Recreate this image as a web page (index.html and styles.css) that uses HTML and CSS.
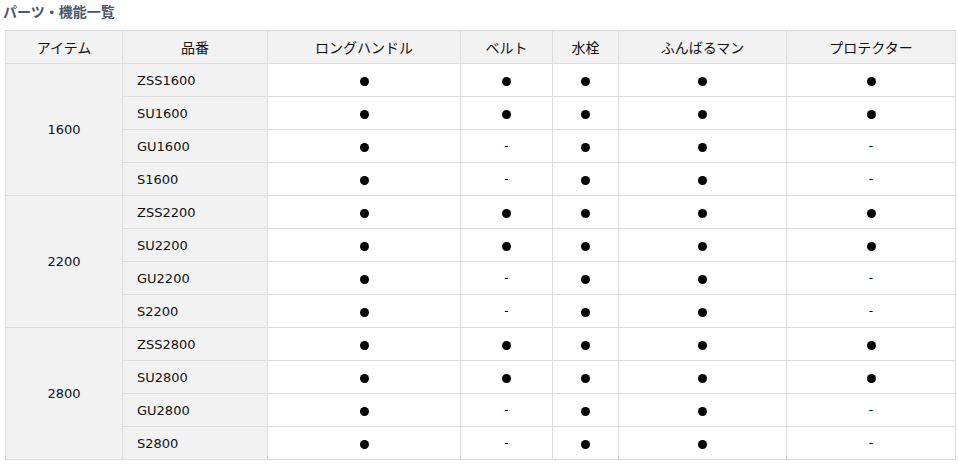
FILE: index.html
```html
<!DOCTYPE html>
<html lang="ja">
<head>
<meta charset="utf-8">
<link rel="stylesheet" href="styles.css">
</head>
<body>
<h2 class="title">パーツ・機能一覧</h2>
<table class="spec">
<colgroup>
<col class="c-item"><col class="c-code"><col class="c-long"><col class="c-belt"><col class="c-water"><col class="c-fun"><col class="c-prot">
</colgroup>
<thead>
<tr><th>アイテム</th><th>品番</th><th>ロングハンドル</th><th>ベルト</th><th>水栓</th><th>ふんばるマン</th><th>プロテクター</th></tr>
</thead>
<tbody>
<tr><td class="item" rowspan="4">1600</td><td class="code">ZSS1600</td><td><span class="dot">●</span></td><td><span class="dot">●</span></td><td><span class="dot">●</span></td><td><span class="dot">●</span></td><td><span class="dot">●</span></td></tr>
<tr><td class="code">SU1600</td><td><span class="dot">●</span></td><td><span class="dot">●</span></td><td><span class="dot">●</span></td><td><span class="dot">●</span></td><td><span class="dot">●</span></td></tr>
<tr><td class="code">GU1600</td><td><span class="dot">●</span></td><td class="dash">-</td><td><span class="dot">●</span></td><td><span class="dot">●</span></td><td class="dash">-</td></tr>
<tr><td class="code">S1600</td><td><span class="dot">●</span></td><td class="dash">-</td><td><span class="dot">●</span></td><td><span class="dot">●</span></td><td class="dash">-</td></tr>
<tr><td class="item" rowspan="4">2200</td><td class="code">ZSS2200</td><td><span class="dot">●</span></td><td><span class="dot">●</span></td><td><span class="dot">●</span></td><td><span class="dot">●</span></td><td><span class="dot">●</span></td></tr>
<tr><td class="code">SU2200</td><td><span class="dot">●</span></td><td><span class="dot">●</span></td><td><span class="dot">●</span></td><td><span class="dot">●</span></td><td><span class="dot">●</span></td></tr>
<tr><td class="code">GU2200</td><td><span class="dot">●</span></td><td class="dash">-</td><td><span class="dot">●</span></td><td><span class="dot">●</span></td><td class="dash">-</td></tr>
<tr><td class="code">S2200</td><td><span class="dot">●</span></td><td class="dash">-</td><td><span class="dot">●</span></td><td><span class="dot">●</span></td><td class="dash">-</td></tr>
<tr><td class="item" rowspan="4">2800</td><td class="code">ZSS2800</td><td><span class="dot">●</span></td><td><span class="dot">●</span></td><td><span class="dot">●</span></td><td><span class="dot">●</span></td><td><span class="dot">●</span></td></tr>
<tr><td class="code">SU2800</td><td><span class="dot">●</span></td><td><span class="dot">●</span></td><td><span class="dot">●</span></td><td><span class="dot">●</span></td><td><span class="dot">●</span></td></tr>
<tr><td class="code">GU2800</td><td><span class="dot">●</span></td><td class="dash">-</td><td><span class="dot">●</span></td><td><span class="dot">●</span></td><td class="dash">-</td></tr>
<tr><td class="code">S2800</td><td><span class="dot">●</span></td><td class="dash">-</td><td><span class="dot">●</span></td><td><span class="dot">●</span></td><td class="dash">-</td></tr>
</tbody>
</table>
</body>
</html>
```
FILE: styles.css
```css
html, body {
  margin: 0;
  padding: 0;
  background: #fff;
}
body {
  padding: 0 5px;
  font-family: "DejaVu Sans", "Noto Sans CJK JP", sans-serif;
  font-size: 13px;
  color: #111;
}
.title {
  margin: 0 0 0 -2px;
  height: 30px;
  padding-top: 1px;
  box-sizing: border-box;
  font-family: "Noto Sans CJK JP", sans-serif;
  font-size: 14px;
  font-weight: bold;
  line-height: 20px;
  color: #4a576a;
}
.spec {
  width: 950px;
  border-collapse: collapse;
  table-layout: fixed;
}
.c-item { width: 117px; }
.c-code { width: 145px; }
.c-long { width: 193px; }
.c-belt { width: 92px; }
.c-water { width: 66px; }
.c-fun { width: 168px; }
.c-prot { width: 169px; }
.spec th, .spec td {
  border: 1px solid #dcdcdc;
  height: 33px;
  padding: 0;
  text-align: center;
  vertical-align: middle;
  box-sizing: border-box;
}
.spec th {
  background: #f2f2f2;
  font-family: "Noto Sans CJK JP", sans-serif;
  font-weight: normal;
  font-size: 14px;
  color: #111;
}
.spec td.item {
  background: #f2f2f2;
}
.spec td.code {
  background: #f2f2f2;
  text-align: left;
  padding-left: 14px;
}
.dot {
  display: inline-block;
  width: 9px;
  height: 9px;
  border-radius: 50%;
  background: #000;
  color: transparent;
  font-size: 1px;
  line-height: 9px;
  overflow: hidden;
  vertical-align: middle;
}
.dash {
  font-size: 12px;
  color: #000;
}
```
